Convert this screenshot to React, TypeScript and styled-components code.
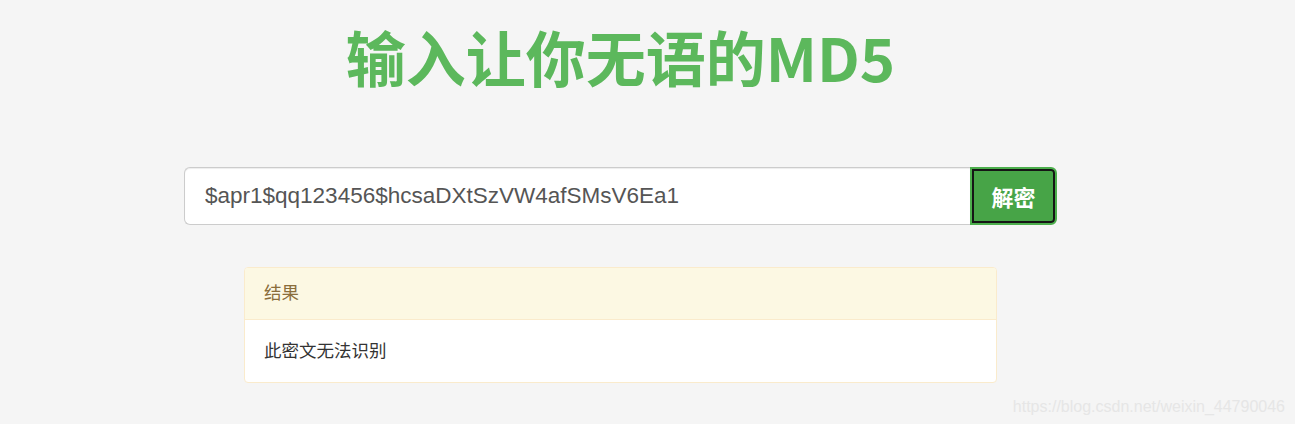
import styled, { createGlobalStyle } from "styled-components";

const GlobalStyle = createGlobalStyle`
  html, body {
    margin: 0;
    padding: 0;
    background: #f5f5f5;
    font-family: "Liberation Sans", Arial, "Noto Sans CJK SC", sans-serif;
  }
`;

const Page = styled.div`
  position: relative;
  width: 1295px;
  height: 424px;
  overflow: hidden;
`;

const Container = styled.div`
  width: 1241px;
  display: flex;
  flex-direction: column;
  align-items: center;
`;

const Title = styled.h1`
  margin: 18px 0 0;
  font-family: "Noto Sans CJK SC", sans-serif;
  font-size: 60px;
  line-height: 76px;
  font-weight: 700;
  color: #5cb85c;
`;

const InputGroup = styled.div`
  display: flex;
  width: 873px;
  height: 58px;
  margin-top: 73px;
`;

const Input = styled.input`
  flex: 1;
  min-width: 0;
  box-sizing: border-box;
  height: 58px;
  padding: 0 20px;
  border: 1px solid #ccc;
  border-right: 0;
  border-radius: 6px 0 0 6px;
  background: #fff;
  box-shadow: inset 0 1px 1px rgba(0, 0, 0, 0.075);
  font-family: "Liberation Sans", Arial, sans-serif;
  font-size: 22.5px;
  color: #555;
  outline: none;
`;

const Button = styled.button`
  width: 87px;
  height: 58px;
  box-sizing: border-box;
  border: 2px solid #4cae4c;
  border-radius: 0 6px 6px 0;
  background: #47a447;
  box-shadow: inset 0 0 0 2px #151515;
  color: #fff;
  font-family: "Noto Sans CJK SC", sans-serif;
  font-size: 22px;
  font-weight: 700;
  cursor: pointer;
`;

const Panel = styled.div`
  width: 753px;
  margin-top: 42px;
  box-sizing: border-box;
  border: 1px solid #faebcc;
  border-radius: 4px;
  background: #fff;
  overflow: hidden;
`;

const PanelHeading = styled.div`
  height: 52px;
  display: flex;
  align-items: center;
  padding: 0 19px 4px;
  box-sizing: border-box;
  background: #fcf8e3;
  border-bottom: 1px solid #faebcc;
  color: #8a6d3b;
  font-family: "Noto Sans CJK SC", sans-serif;
  font-size: 17.5px;
`;

const PanelBody = styled.div`
  height: 62px;
  display: flex;
  align-items: center;
  padding: 0 19px 3px;
  box-sizing: border-box;
  color: #333;
  font-family: "Noto Sans CJK SC", sans-serif;
  font-size: 17.5px;
`;

const Watermark = styled.div`
  position: absolute;
  right: 10px;
  bottom: 8px;
  font-family: "Liberation Sans", Arial, sans-serif;
  font-size: 16px;
  color: #e6e6e6;
`;

export default function App() {
  return (
    <Page>
      <GlobalStyle />
      <Container>
        <Title>输入让你无语的MD5</Title>
        <InputGroup>
          <Input defaultValue="$apr1$qq123456$hcsaDXtSzVW4afSMsV6Ea1" />
          <Button>解密</Button>
        </InputGroup>
        <Panel>
          <PanelHeading>结果</PanelHeading>
          <PanelBody>此密文无法识别</PanelBody>
        </Panel>
      </Container>
      <Watermark>https://blog.csdn.net/weixin_44790046</Watermark>
    </Page>
  );
}
